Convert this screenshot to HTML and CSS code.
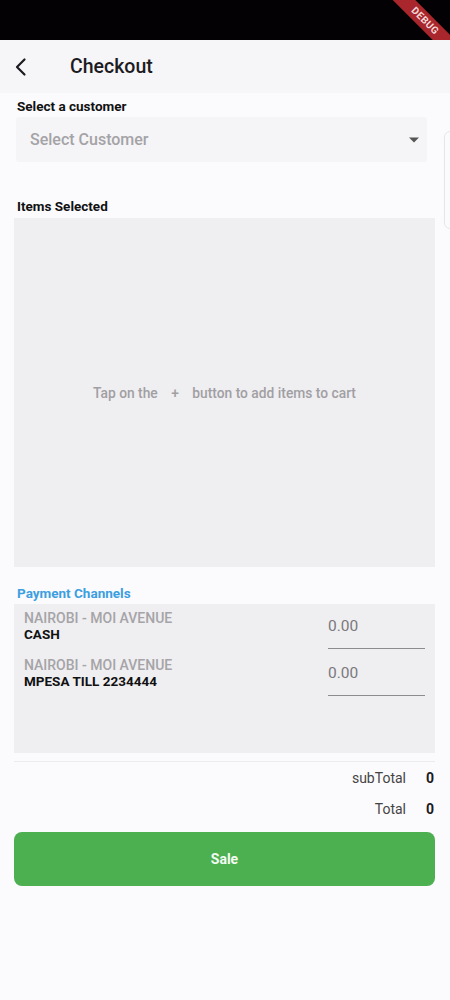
FILE: index.html
```html
<!DOCTYPE html>
<html lang="en">
<head>
  <meta charset="UTF-8" />
  <meta name="viewport" content="width=device-width, initial-scale=1.0" />
  <title>Checkout</title>
  <link rel="stylesheet" href="styles.css">
</head>
<body>
  <div class="status-bar">
    <div class="debug-banner">DEBUG</div>
  </div>

  <header class="app-bar">
    <svg class="back-icon" width="24" height="24" viewBox="0 0 24 24">
      <path d="M15.5 4.5 L8 12 L15.5 19.5" fill="none" stroke="#1c1b1f" stroke-width="2.2" stroke-linecap="round" stroke-linejoin="round"/>
    </svg>
    <h1>Checkout</h1>
  </header>

  <main class="content">
    <div class="side-card"></div>

    <h3 class="label">Select a customer</h3>
    <div class="dropdown">
      <span>Select Customer</span>
      <svg width="10" height="6" viewBox="0 0 10 5"><path d="M0 0 L10 0 L5 5 Z" fill="#555"/></svg>
    </div>

    <h3 class="label items-label">Items Selected</h3>
    <div class="cart-box">
      <p>Tap on the <span class="plus">+</span> button to add items to cart</p>
    </div>

    <h3 class="label channels-label">Payment Channels</h3>
    <div class="channels-box">
      <div class="channel">
        <div class="channel-info">
          <div class="branch">NAIROBI - MOI AVENUE</div>
          <div class="channel-name">CASH</div>
        </div>
        <div class="amount">0.00</div>
      </div>
      <div class="channel">
        <div class="channel-info">
          <div class="branch">NAIROBI - MOI AVENUE</div>
          <div class="channel-name">MPESA TILL 2234444</div>
        </div>
        <div class="amount">0.00</div>
      </div>
    </div>

    <div class="totals">
      <div class="total-row"><span class="total-label">subTotal</span><span class="total-value">0</span></div>
      <div class="total-row"><span class="total-label">Total</span><span class="total-value">0</span></div>
    </div>

    <button class="sale-btn">Sale</button>
  </main>
</body>
</html>
```

FILE: styles.css
```css
body {
  margin: 0;
  font-family: Roboto, "Liberation Sans", sans-serif;
  background-color: #fbfafd;
  color: #1c1b1f;
  width: 450px;
  height: 1000px;
  overflow: hidden;
}
.status-bar {
  height: 40px;
  background-color: #030104;
  position: relative;
  overflow: hidden;
}
.debug-banner {
  position: absolute;
  top: 13px;
  right: -35px;
  width: 120px;
  height: 16px;
  line-height: 16px;
  background-color: #a8262c;
  color: #f2d6d6;
  font-size: 10px;
  font-weight: bold;
  text-align: center;
  letter-spacing: 0.5px;
  transform: rotate(45deg);
}
.app-bar {
  height: 53px;
  background-color: #f6f5f8;
  display: flex;
  align-items: center;
  padding-left: 9px;
}
.back-icon {
  margin-top: 1px;
}
.app-bar h1 {
  margin: 0 0 0 37px;
  font-size: 19.5px;
  font-weight: 500;
  color: #1c1b1f;
}
.content {
  position: relative;
  padding: 0 15px 0 14px;
}
.side-card {
  position: absolute;
  top: 38px;
  right: -8px;
  width: 12px;
  height: 96px;
  border: 1px solid #e6e5e9;
  border-radius: 6px;
}
.label {
  margin: 0;
  padding-left: 3px;
  font-size: 13.5px;
  font-weight: bold;
  color: #111;
  line-height: 16px;
}
.content > .label:first-of-type {
  padding-top: 5px;
}
.dropdown {
  margin: 3px 8px 0 2px;
  height: 45px;
  background-color: #f5f4f7;
  display: flex;
  align-items: center;
  justify-content: space-between;
  padding: 0 8px 0 14px;
  border-radius: 3px;
}
.dropdown span {
  font-size: 16px;
  font-weight: 500;
  color: #a4a3a6;
}
.items-label {
  margin-top: 36px;
}
.cart-box {
  margin-top: 4px;
  height: 349px;
  background-color: #efeef1;
  display: flex;
  align-items: center;
  justify-content: center;
}
.cart-box p {
  margin: 0;
  font-size: 13.8px;
  font-weight: 500;
  color: #a19fa3;
}
.plus {
  margin: 0 10px;
}
.channels-label {
  margin-top: 18px;
  color: #3b9fe0;
}
.channels-box {
  margin-top: 3px;
  height: 149px;
  background-color: #efeef1;
  padding: 7px 10px 0 10px;
  box-sizing: border-box;
}
.channel {
  display: flex;
  justify-content: space-between;
  height: 47px;
}
.channel-info {
  line-height: 15px;
}
.branch {
  font-size: 14px;
  font-weight: 500;
  color: #a5a4a7;
}
.channel-name {
  font-size: 13.5px;
  font-weight: bold;
  color: #111;
  margin-top: 1px;
}
.amount {
  width: 97px;
  height: 38px;
  border-bottom: 1px solid #8d8c8f;
  font-size: 15.5px;
  color: #7a797c;
  padding-top: 6px;
  box-sizing: border-box;
}
.totals {
  margin-top: 8px;
  border-top: 1px solid #ebeaee;
}
.total-row {
  display: flex;
  justify-content: flex-end;
  align-items: center;
  height: 31px;
  font-size: 14px;
}
.total-label {
  color: #444;
}
.total-value {
  font-weight: bold;
  width: 28px;
  text-align: right;
  padding-right: 1px;
}
.sale-btn {
  display: block;
  width: 100%;
  margin-top: 8px;
  height: 54px;
  border: none;
  border-radius: 8px;
  background-color: #4caf50;
  color: #f3fbf3;
  font-family: Roboto, "Liberation Sans", sans-serif;
  font-size: 14px;
  font-weight: bold;
}
```
